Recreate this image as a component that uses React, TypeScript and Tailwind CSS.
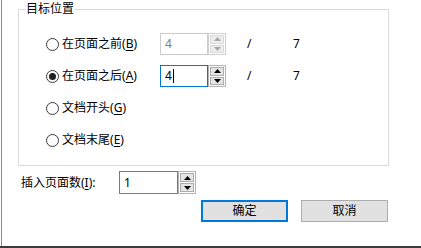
import React from 'react';

const Arrow = ({ up, color }: { up?: boolean; color: string }) => (
  <svg width="7" height="4" viewBox="0 0 7 4">
    {up ? <polygon points="0,4 7,4 3.5,0" fill={color} /> : <polygon points="0,0 7,0 3.5,4" fill={color} />}
  </svg>
);

function Spin({
  value,
  textW,
  h,
  disabled,
  focused,
  caret,
  boxBorder,
}: {
  value: string;
  textW: string;
  h: string;
  disabled?: boolean;
  focused?: boolean;
  caret?: boolean;
  boxBorder: string;
}) {
  const arrow = disabled ? '#a6a6a6' : '#000';
  return (
    <div className={`flex ${h}`}>
      <div
        className={`${textW} h-full border ${boxBorder} bg-white flex items-center pl-[4px] ${
          disabled ? 'text-[#7d7d7d]' : 'text-black'
        }`}
      >
        <span>{value}</span>
        {caret && <span className="ml-px w-px h-[14px] bg-black" />}
      </div>
      <div
        className={`w-[18px] h-full flex flex-col gap-px p-px border ${
          disabled ? 'border-[#cfcfcf]' : 'border-[#b4b4b4]'
        } bg-white`}
      >
        <div
          className={`flex-1 flex items-center justify-center border ${
            disabled ? 'border-[#d9d9d9] bg-[#ececec]' : 'border-[#adadad] bg-[#e5e5e5]'
          }`}
        >
          <Arrow up color={arrow} />
        </div>
        <div
          className={`flex-1 flex items-center justify-center border ${
            disabled ? 'border-[#d9d9d9] bg-[#ececec]' : 'border-[#adadad] bg-[#e5e5e5]'
          }`}
        >
          <Arrow color={arrow} />
        </div>
      </div>
    </div>
  );
}

function Radio({ checked, label, k }: { checked?: boolean; label: string; k: string }) {
  return (
    <div className="flex items-center w-[114px]">
      <span className="w-[13px] h-[13px] rounded-full border border-[#3c3c3c] bg-white flex items-center justify-center">
        {checked && <span className="w-[7px] h-[7px] rounded-full bg-[#222]" />}
      </span>
      <span className="ml-[3px]">
        {label}(<span className="underline underline-offset-2">{k}</span>)
      </span>
    </div>
  );
}

export default function App() {
  return (
    <div className="w-[421px] h-[248px] bg-white border-b-2 border-[#3c3c3c] text-[12px] leading-[14px] text-black font-['Noto_Sans','Noto_Sans_CJK_SC',sans-serif]">
      <div className="ml-px h-full border-l border-[#8c8c8c] pl-[16px] pt-[2px]">
        <fieldset className="w-[371px] border border-[#dcdcdc] p-0 pb-[9px] m-0">
          <legend className="ml-[6px] px-px leading-[14px]">目标位置</legend>
          <div className="pt-[12px] pl-[27px]">
            <div className="h-[32px] flex items-center">
              <Radio label="在页面之前" k="B" />
              <Spin value="4" textW="w-[48px]" h="h-[22px]" disabled boxBorder="border-[#cccccc]" />
              <span className="ml-[21px] w-[46px]">/</span>
              <span>7</span>
            </div>
            <div className="h-[32px] flex items-center">
              <Radio checked label="在页面之后" k="A" />
              <Spin value="4" textW="w-[48px]" h="h-[22px]" focused caret boxBorder="border-[#0078d7]" />
              <span className="ml-[21px] w-[46px]">/</span>
              <span>7</span>
            </div>
            <div className="h-[32px] flex items-center">
              <Radio label="文档开头" k="G" />
            </div>
            <div className="h-[32px] flex items-center">
              <Radio label="文档末尾" k="E" />
            </div>
          </div>
        </fieldset>
        <div className="mt-[5px] flex items-center h-[23px]">
          <span className="ml-[3px] w-[98px]">
            插入页面数(<span className="underline underline-offset-2">I</span>):
          </span>
          <Spin value="1" textW="w-[59px]" h="h-[23px]" boxBorder="border-[#7a7a7a]" />
        </div>
        <div className="mt-[6px] flex">
          <button className="ml-[183px] w-[87px] h-[22px] border-2 border-[#0078d7] bg-[#e1e1e1] text-[12px]">
            确定
          </button>
          <button className="ml-[13px] w-[87px] h-[22px] border border-[#adadad] bg-[#e1e1e1] text-[12px]">
            取消
          </button>
        </div>
      </div>
    </div>
  );
}
